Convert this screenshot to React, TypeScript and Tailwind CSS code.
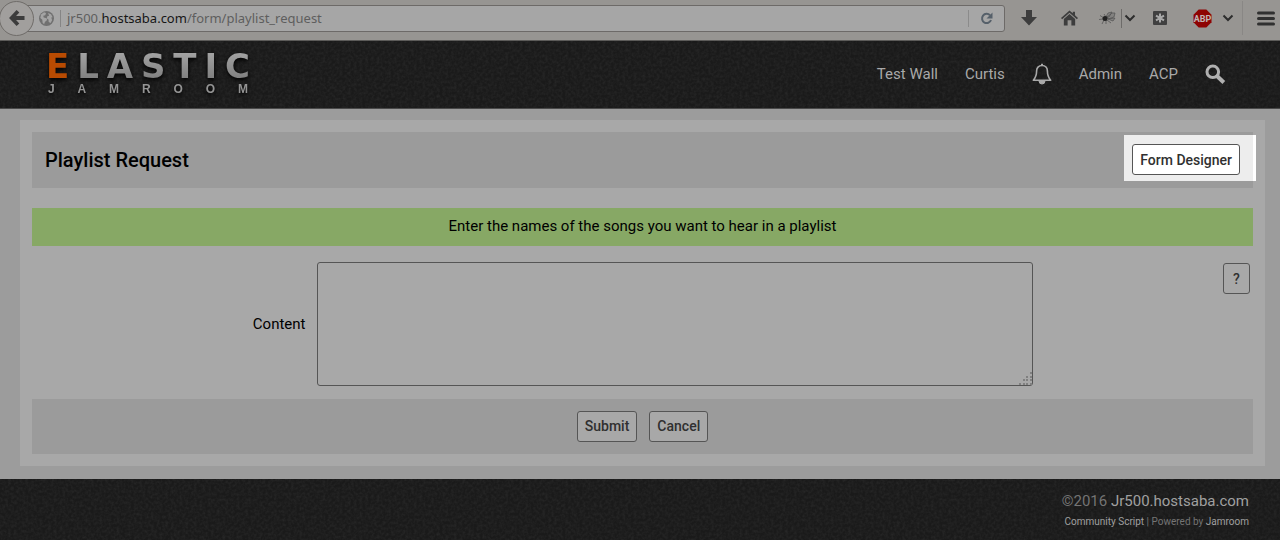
import { ReactNode } from "react";

const navLink = "text-[15px] leading-5 text-[#a9a9a9]";
const formButton =
    "h-[31px] rounded-[3px] border border-[#555] px-[7px] text-[14px] leading-5 font-medium text-[#303030]";

// Fine grain laid over the dark header and footer bars
function Grain({ id }: { id: string }) {
    return (
        <svg className="pointer-events-none absolute inset-0 h-full w-full" aria-hidden="true">
            <filter id={id} x="0" y="0" width="100%" height="100%" colorInterpolationFilters="sRGB">
                <feTurbulence type="fractalNoise" baseFrequency="0.35" numOctaves="2" seed="4" />
                <feColorMatrix values="0 0 0 0 1  0 0 0 0 1  0 0 0 0 1  0.1 0 0 0 -0.035" />
            </filter>
            <rect width="100%" height="100%" filter={`url(#${id})`} />
        </svg>
    );
}

function ToolButton({ label, className, children }: { label: string; className: string; children: ReactNode }) {
    return (
        <button type="button" aria-label={label} className={`flex shrink-0 items-center justify-center ${className}`}>
            {children}
        </button>
    );
}

function Chevron() {
    return (
        <svg width="12" height="8" viewBox="0 0 12 8" fill="none" stroke="#2d2d2d" strokeWidth="2">
            <path d="M1.500 1.500 6 6l4.500-4.500" />
        </svg>
    );
}

function BrowserBar() {
    return (
        <div className="flex h-[41px] items-center border-b border-[#5c5b59] bg-[#979592] pb-1">
            <ToolButton
                label="Back"
                className="relative z-10 -ml-px h-[35px] w-[35px] rounded-full border border-[#6f6c69] bg-[#a19f9d]"
            >
                <svg width="16" height="18" viewBox="0 0 17 18" fill="none" stroke="#3c3c3c" strokeWidth="4">
                    <path d="M9.500 1.800 2.800 9l6.700 7.200M3 9h13.500" />
                </svg>
            </ToolButton>
            <div className="-ml-2 flex h-[27px] min-w-0 flex-1 items-center rounded-r-[3px] border border-[#6d6a68] bg-[#a6a6a6] pl-3">
                <svg width="15" height="15" viewBox="0 0 15 15" className="shrink-0">
                    <circle cx="7.500" cy="7.500" r="7.500" fill="#707070" />
                    <path
                        d="M2 3.500 5 1.300l2 .8-.7 2.100-2 .6.400 1.700 2.800.8.600 1.800-2.200 1.800-.8 2.400-1.500-1.600-.3-3L1.300 7ZM9 2l3 1.200 1.600 3-1.300.3.800 2.800-1.500 2.700-1.900-.9-.2-2.500-1.700-1.200.5-2.100 1.800-.6Z"
                        fill="#a4a4a4"
                    />
                </svg>
                <span className="mx-[6px] h-[17px] w-px shrink-0 bg-[#858585]" />
                <div
                    role="textbox"
                    aria-label="Address"
                    contentEditable
                    suppressContentEditableWarning
                    className="min-w-0 flex-1 font-['Noto_Sans',sans-serif] text-[13px] leading-5 whitespace-nowrap text-[#5e5e5e] outline-none"
                >
                    jr500.<span className="text-[#161616]">hostsaba.com</span>/form/playlist_request
                </div>
                <span className="h-[17px] w-px bg-[#8b8b8b]" />
                <ToolButton label="Reload" className="w-[35px]">
                    <svg width="13" height="13" viewBox="0 0 13 13" fill="none">
                        <path d="M10 3.300A4.600 4.600 0 1 0 11 8" stroke="#56606a" strokeWidth="2" />
                        <path d="M12.500.5v6h-6Z" fill="#56606a" />
                    </svg>
                </ToolButton>
            </div>
            <ToolButton label="Downloads" className="ml-[15px] w-[17px]">
                <svg width="16" height="16" viewBox="0 0 16 16" fill="#3d3d3d">
                    <path d="M5 0h6v7h5l-8 8.500L0 7h5Z" />
                </svg>
            </ToolButton>
            <ToolButton label="Home" className="ml-6 w-[17px]">
                <svg width="18" height="16" viewBox="0 0 18 16" fill="#3d3d3d">
                    <path d="M9 0 12.500 3V1.300h2.300V5L18 8l-1.200 1.200L9 2.400 1.200 9.200 0 8Z" />
                    <path d="M9 3.800 15 9v7h-4v-5.500H7V16H3V9Z" />
                </svg>
            </ToolButton>
            <ToolButton label="Firebug" className="ml-[21px] w-[18px]">
                <svg width="18" height="14" viewBox="0 0 18 14">
                    <path d="M5 7 1 4.500M4 8 0 8.500M5 9l-2 4M7 9v4M8 9l4 3M7 6 5 3" stroke="#565656" strokeWidth=".8" />
                    <path d="M7 6 9 2l4-1-3 5ZM8 6l5-4 3 0-1 4-6 2ZM9 8l7-1-2 3Z" fill="#838280" stroke="#505050" strokeWidth=".7" />
                    <ellipse cx="6" cy="7.500" rx="2.500" ry="2.500" fill="#222" />
                </svg>
            </ToolButton>
            <span className="ml-1 h-[19px] w-px bg-[#6d6b69]" />
            <ToolButton label="Firebug options" className="ml-px w-[14px]">
                <Chevron />
            </ToolButton>
            <ToolButton label="Add-on" className="ml-[15px] w-[15px]">
                <svg width="14" height="14" viewBox="0 0 14 14">
                    <rect width="14" height="14" rx="1" fill="#404040" />
                    <path d="M7 2.500v9M3 4.700l8 4.600M3 9.300l8-4.600" stroke="#a8a8a8" strokeWidth="2" />
                </svg>
            </ToolButton>
            <ToolButton label="Adblock Plus" className="ml-[26px] w-[19px]">
                <svg width="19" height="19" viewBox="0 0 19 19">
                    <path d="M5.700.5h7.600l5.200 5.200v7.600l-5.200 5.200H5.700L.5 13.300V5.700Z" fill="#8e0303" />
                    <text
                        x="9.500"
                        y="12.500"
                        textAnchor="middle"
                        fontFamily="Roboto, sans-serif"
                        fontWeight="bold"
                        fontSize="9"
                        fill="#c0b4b4"
                    >
                        ABP
                    </text>
                </svg>
            </ToolButton>
            <ToolButton label="Adblock options" className="ml-[10px] w-[12px]">
                <Chevron />
            </ToolButton>
            <span className="ml-2 h-[34px] w-px bg-[#898785]" />
            <ToolButton label="Open menu" className="mr-[5px] ml-[14px] w-[18px]">
                <svg width="18" height="15" viewBox="0 0 18 15" stroke="#303030" strokeWidth="3" strokeLinecap="round">
                    <path d="M1.500 2h15M1.500 7.500h15M1.500 13h15" />
                </svg>
            </ToolButton>
        </div>
    );
}

function Logo() {
    return (
        <a href="#" aria-label="Elastic Jamroom" className="block w-[204px] [filter:drop-shadow(0_2px_2px_#000)]">
            <span className="flex justify-between font-['DejaVu_Sans',sans-serif] text-[34px] leading-[28px] font-bold text-[#929292]">
                <span className="text-[#b84b02]">E</span>
                {"LASTIC".split("").map((letter) => (
                    <span key={letter} className="bg-linear-to-b from-[#a4a4a4] to-[#7e7e7e] bg-clip-text text-transparent">
                        {letter}
                    </span>
                ))}
            </span>
            <span className="mt-0.5 flex justify-between px-0.5 font-['Liberation_Sans',sans-serif] text-[12px] leading-[14px] font-bold text-[#949494]">
                {"JAMROOM".split("").map((letter, i) => (
                    <span key={i}>{letter}</span>
                ))}
            </span>
        </a>
    );
}

function SiteHeader() {
    return (
        <header className="relative h-[68px] border-b border-[#4a4a4a] bg-[#1a1a1a]">
            <Grain id="header-grain" />
            <div className="relative flex h-full items-center justify-between pr-[54px] pb-px pl-[46px]">
                <Logo />
                <nav className="flex items-center gap-[27px]">
                    <a href="#" className={navLink}>Test Wall</a>
                    <a href="#" className={navLink}>Curtis</a>
                    <a href="#" aria-label="Notifications">
                        <svg width="20" height="22" viewBox="0 0 20 22" fill="none" stroke="#a9a9a9">
                            <path
                                d="M10 2.500C6.500 2.500 4.600 5 4.600 8c0 5-1.300 7-3.300 9.200h17.400C16.700 15 15.400 13 15.400 8c0-3-1.900-5.500-5.400-5.500Z"
                                strokeWidth="1.600"
                                strokeLinejoin="round"
                            />
                            <path d="M10 .8v1.800" strokeWidth="2" />
                            <path d="M7 18h6a3 3 0 0 1-6 0Z" fill="#a9a9a9" />
                        </svg>
                    </a>
                    <a href="#" className={navLink}>Admin</a>
                    <a href="#" className={navLink}>ACP</a>
                    <a href="#" aria-label="Search">
                        <svg width="21" height="21" viewBox="0 0 21 21" fill="none" stroke="#b0b0b0">
                            <circle cx="7.800" cy="7.800" r="5.800" strokeWidth="3" />
                            <path d="m12 12 6.800 6.500" strokeWidth="4" />
                        </svg>
                    </a>
                </nav>
            </div>
        </header>
    );
}

function PlaylistForm() {
    return (
        <form className="bg-[#a8a8a8] p-3" onSubmit={(e) => e.preventDefault()}>
            <div className="relative flex h-14 items-center justify-between bg-[#9b9b9b] px-[13px] pb-px">
                <h1 className="text-[20px] leading-6 font-medium text-black">Playlist Request</h1>
                {/* Spotlight around the designer button */}
                <div className="absolute top-[3px] -right-[3px] h-[46px] w-[132px] border-r-[3px] border-white bg-[#ededed]" />
                <button type="button" className={`${formButton} relative bg-white`}>
                    Form Designer
                </button>
            </div>

            <p className="mt-5 bg-[#87a865] pt-2 pb-[10px] text-center text-[15px] leading-5 text-black">
                Enter the names of the songs you want to hear in a playlist
            </p>

            <div className="mt-4 mb-[13px] flex items-start">
                <label htmlFor="content" className="w-[22.4%] self-center text-right text-[15px] leading-5 text-black">
                    Content
                </label>
                <div className="relative ml-[11px] w-[58.7%]">
                    <textarea
                        id="content"
                        className="block h-[124px] w-full resize-none rounded-[3px] border border-[#555] bg-[#a8a8a8] p-2 text-[14px] text-black outline-none"
                    />
                    <svg className="pointer-events-none absolute right-px bottom-px" width="13" height="13" fill="#808080">
                        <path d="M11 0h2v2h-2zM7 4h2v2H7zM11 4h2v2h-2zM4 7h2v2H4zM7 7h2v2H7zM11 7h2v2h-2zM0 11h2v2H0zM4 11h2v2H4zM7 11h2v2H7zM11 11h2v2h-2z" />
                    </svg>
                </div>
                <button type="button" aria-label="Help" className={`${formButton} mt-px mr-[3px] ml-auto w-[27px]`}>
                    ?
                </button>
            </div>

            <div className="flex h-[55px] items-center justify-center gap-3 bg-[#9b9b9b] pb-px">
                <button type="submit" className={`${formButton} bg-[#a8a8a8]`}>Submit</button>
                <button type="button" className={`${formButton} bg-[#a8a8a8]`}>Cancel</button>
            </div>
        </form>
    );
}

function SiteFooter() {
    return (
        <footer className="relative bg-[#1a1a1a]">
            <Grain id="footer-grain" />
            <div className="relative px-[31px] pt-3 pb-2 text-right text-[#747474]">
                <p className="text-[15px] leading-5">
                    ©2016 <a href="#" className="text-[#a0a0a0]">Jr500.hostsaba.com</a>
                </p>
                <p className="mt-px text-[10px] leading-5">
                    <a href="#" className="text-[#a0a0a0]">Community Script</a> | Powered by{" "}
                    <a href="#" className="text-[#a0a0a0]">Jamroom</a>
                </p>
            </div>
        </footer>
    );
}

export default function App() {
    return (
        <div className="min-h-screen bg-[#1a1a1a] font-['Roboto',sans-serif]">
            <BrowserBar />
            <SiteHeader />
            <main className="bg-[#9c9c9c] pt-[11px] pr-[15px] pb-[13px] pl-5">
                <PlaylistForm />
            </main>
            <SiteFooter />
        </div>
    );
}
